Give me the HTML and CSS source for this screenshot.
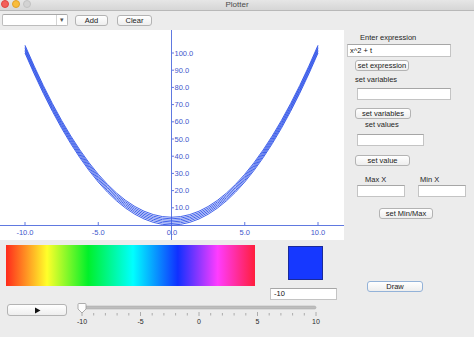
FILE: index.html
```html
<!DOCTYPE html>
<html>
<head>
<meta charset="utf-8">
<title>Plotter</title>
<link rel="stylesheet" href="styles.css">
</head>
<body>
<div class="win">
  <div class="titlebar">
    <div class="lights"><span class="light red"></span><span class="light yellow"></span><span class="light gray"></span></div>
    <div class="title">Plotter</div>
    <div></div>
  </div>
  <div class="toolbar">
    <div class="combo"><span class="combo-field"></span><span class="combo-arrow">▾</span></div>
    <div class="btn btn-add">Add</div>
    <div class="btn btn-clear">Clear</div>
  </div>
  <div class="main">
    <div class="plot">
      <svg class="plot-svg" width="344" height="210" viewBox="0 0 344 210">
        <g class="axes">
          <line x1="0" y1="195.5" x2="344" y2="195.5"/>
          <line x1="171.5" y1="0" x2="171.5" y2="210"/>
          <path d="M25 192V195M98.25 192V195M244.75 192V195M318 192V195M171.5 177.8H174M171.5 160.6H174M171.5 143.4H174M171.5 126.2H174M171.5 109H174M171.5 91.8H174M171.5 74.6H174M171.5 57.4H174M171.5 40.2H174M171.5 23H174"/>
        </g>
        <g class="curves">
          <path d="M25 23 Q171.5 367 318 23"/>
          <path d="M25 21.45 Q171.5 365.45 318 21.45"/>
          <path d="M25 19.9 Q171.5 363.9 318 19.9"/>
          <path d="M25 18.35 Q171.5 362.35 318 18.35"/>
          <path d="M25 16.8 Q171.5 360.8 318 16.8"/>
          <path d="M25 15.25 Q171.5 359.25 318 15.25"/>
        </g>
        <g class="xlabels">
          <text x="25" y="205">-10.0</text>
          <text x="98.25" y="205">-5.0</text>
          <text x="172" y="205">0.0</text>
          <text x="244.75" y="205">5.0</text>
          <text x="318" y="205">10.0</text>
        </g>
        <g class="ylabels">
          <text x="174.5" y="25.6">100.0</text>
          <text x="174.5" y="42.8">90.0</text>
          <text x="174.5" y="60">80.0</text>
          <text x="174.5" y="77.2">70.0</text>
          <text x="174.5" y="94.4">60.0</text>
          <text x="174.5" y="111.6">50.0</text>
          <text x="174.5" y="128.8">40.0</text>
          <text x="174.5" y="146">30.0</text>
          <text x="174.5" y="163.2">20.0</text>
          <text x="174.5" y="180.4">10.0</text>
        </g>
      </svg>
    </div>
    <div class="side">
      <div class="lbl lbl-expr">Enter expression</div>
      <div class="field field-expr">x^2 + t</div>
      <div class="btn btn-setexpr">set expression</div>
      <div class="lbl lbl-vars">set variables</div>
      <div class="field field-vars"></div>
      <div class="btn btn-setvars">set variables</div>
      <div class="lbl lbl-vals">set values</div>
      <div class="field field-vals"></div>
      <div class="btn btn-setval">set value</div>
      <div class="minmax-labels"><span class="lbl-max">Max X</span><span class="lbl-min">Min X</span></div>
      <div class="minmax-fields"><div class="field field-max"></div><div class="field field-min"></div></div>
      <div class="btn btn-minmax">set Min/Max</div>
    </div>
  </div>
  <div class="bottom">
    <div class="row-a">
      <div class="spectrum"></div>
      <div class="mid">
        <div class="swatch"></div>
        <div class="field field-t">-10</div>
      </div>
      <div class="btn btn-draw">Draw</div>
    </div>
    <div class="row-b">
      <div class="btn btn-play"><svg width="7" height="7" viewBox="0 0 7 7"><path d="M1 0.5 L6.5 3.5 L1 6.5 Z" fill="#111"/></svg></div>
      <div class="slider">
        <svg width="252" height="35" viewBox="0 0 252 35">
          <rect class="track" x="6" y="4" width="236" height="3" rx="1.5"/>
          <path class="ticks" d="M8 10V14M19.7 11V13.5M31.4 11V13.5M43.1 11V13.5M54.8 11V13.5M66.5 10V14M78.2 11V13.5M89.9 11V13.5M101.6 11V13.5M113.3 11V13.5M125 10V14M136.7 11V13.5M148.4 11V13.5M160.1 11V13.5M171.8 11V13.5M183.5 10V14M195.2 11V13.5M206.9 11V13.5M218.6 11V13.5M230.3 11V13.5M242 10V14"/>
          <path class="thumb" d="M4 2.5 Q4 1.5 5 1.5 H11 Q12 1.5 12 2.5 V7 L8 11 L4 7 Z"/>
          <g class="slabels">
            <text x="8" y="22">-10</text>
            <text x="66.5" y="22">-5</text>
            <text x="125" y="22">0</text>
            <text x="183.5" y="22">5</text>
            <text x="242" y="22">10</text>
          </g>
        </svg>
      </div>
    </div>
  </div>
</div>
</body>
</html>
```

FILE: styles.css
```css
* { box-sizing: border-box; }
html, body { margin: 0; padding: 0; }
body {
  width: 474px;
  height: 337px;
  overflow: hidden;
  background: #ececec;
  font-family: "Liberation Sans", Arial, sans-serif;
  font-size: 7.5px;
  color: #1e1e1e;
}
.win { width: 474px; height: 337px; display: flex; flex-direction: column; }

.titlebar {
  height: 11px;
  display: grid;
  grid-template-columns: 1fr auto 1fr;
  align-items: center;
  background: linear-gradient(#e6e6e6, #d6d6d6);
  border-bottom: 1px solid #b8b8b8;
}
.lights { display: flex; gap: 3px; padding-left: 1px; margin-top: -3px; }
.light { width: 8px; height: 8px; border-radius: 50%; display: block; }
.red { background: #f3605a; border: 0.5px solid #e0463f; }
.yellow { background: #f9bd3c; border: 0.5px solid #e0a02a; }
.gray { background: #d3d3d3; border: 0.5px solid #c2c2c2; }
.title { font-size: 8px; color: #4a4a4a; margin-top: -2px; }

.toolbar {
  height: 19px;
  display: flex;
  align-items: flex-start;
  padding-top: 3px;
  padding-left: 2px;
  background: #ececec;
}
.combo {
  width: 66px;
  height: 12px;
  display: flex;
  background: #fff;
  border: 1px solid #bdbdbd;
  border-top-color: #a8a8a8;
  border-radius: 2px;
}
.combo-field { flex: 1; border-right: 1px solid #d4d4d4; }
.combo-arrow { width: 10px; font-size: 7px; line-height: 10px; text-align: center; color: #555; }

.btn {
  height: 11px;
  border: 1px solid #b3b3b3;
  border-radius: 3px;
  background: linear-gradient(#ffffff, #eeeeee);
  font-size: 7.5px;
  line-height: 9px;
  text-align: center;
  color: #1a1a1a;
  white-space: nowrap;
}
.btn-add { width: 33px; margin-left: 7px; margin-top: 1px; }
.btn-clear { width: 35px; margin-left: 9px; margin-top: 1px; }

.main { height: 210px; display: flex; }
.plot { width: 344px; height: 210px; background: #fff; }
.plot-svg { display: block; }
.axes line, .axes path { stroke: #6079e0; stroke-width: 1; fill: none; }
.curves path { stroke: #2c50e8; stroke-width: 0.9; fill: none; }
.xlabels text { font-size: 7.5px; fill: #4258cc; text-anchor: middle; }
.ylabels text { font-size: 7.5px; fill: #4258cc; }

.side {
  width: 130px;
  display: flex;
  flex-direction: column;
  align-items: flex-start;
}
.lbl { height: 10px; line-height: 10px; font-size: 7.5px; color: #1e1e1e; }
.field {
  background: #fff;
  border: 1px solid #c4c4c4;
  border-top-color: #a6a6a6;
  font-size: 7.5px;
  line-height: 10px;
  padding-left: 2px;
  color: #111;
}
.lbl-expr { margin-top: 3px; margin-left: 16px; }
.field-expr { margin-top: 1px; margin-left: 3px; width: 104px; height: 13px; line-height: 11px; }
.btn-setexpr { margin-top: 3px; margin-left: 11px; width: 54px; }
.lbl-vars { margin-top: 4px; margin-left: 11px; }
.field-vars { margin-top: 3px; margin-left: 13px; width: 94px; height: 12px; }
.btn-setvars { margin-top: 8px; margin-left: 11px; width: 56px; }
.lbl-vals { margin-top: 1px; margin-left: 21px; }
.field-vals { margin-top: 4px; margin-left: 13px; width: 67px; height: 12px; }
.btn-setval { margin-top: 9px; margin-left: 11px; width: 55px; }
.minmax-labels { margin-top: 9px; height: 10px; line-height: 10px; display: flex; }
.lbl-max { margin-left: 21px; width: 55px; }
.minmax-fields { display: flex; }
.field-max { margin-left: 13px; width: 48px; height: 12px; }
.field-min { margin-left: 13px; width: 48px; height: 12px; }
.btn-minmax { margin-top: 11px; margin-left: 35px; width: 54px; }

.bottom { flex: 1; display: flex; flex-direction: column; }
.row-a { height: 62px; display: flex; align-items: flex-start; }
.spectrum {
  margin-top: 5px;
  margin-left: 6px;
  width: 249px;
  height: 41px;
  background: linear-gradient(to right, #ff2a1c 0%, #ffff2a 16.5%, #00f02a 33%, #00ffff 51%, #1030ff 69%, #ff3cff 85%, #ff1e3c 100%);
}
.mid { margin-left: 15px; width: 67px; display: flex; flex-direction: column; }
.swatch {
  margin-top: 6px;
  margin-left: 18px;
  width: 35px;
  height: 34px;
  background: #1638ff;
  border: 1px solid #1a2a9a;
}
.field-t { margin-top: 8px; height: 12px; width: 67px; padding-left: 3px; }
.btn-draw { margin-left: 30px; margin-top: 41px; width: 56px; border-color: #93b2d8; }

.row-b { flex: 1; display: flex; align-items: flex-start; }
.btn-play {
  margin-top: 2px;
  margin-left: 7px;
  width: 60px;
  height: 12px;
  display: flex;
  align-items: center;
  justify-content: center;
}
.btn-play svg { display: block; }
.slider { margin-left: 7px; width: 252px; height: 35px; }
.slider svg { display: block; }
.track { fill: #bdbdbd; stroke: #a4a4a4; stroke-width: 0.5; }
.ticks { stroke: #9c9c9c; stroke-width: 0.8; fill: none; }
.thumb { fill: #fdfdfd; stroke: #9a9a9a; stroke-width: 0.8; }
.slabels text { font-size: 7px; fill: #2a2a2a; text-anchor: middle; }
```
